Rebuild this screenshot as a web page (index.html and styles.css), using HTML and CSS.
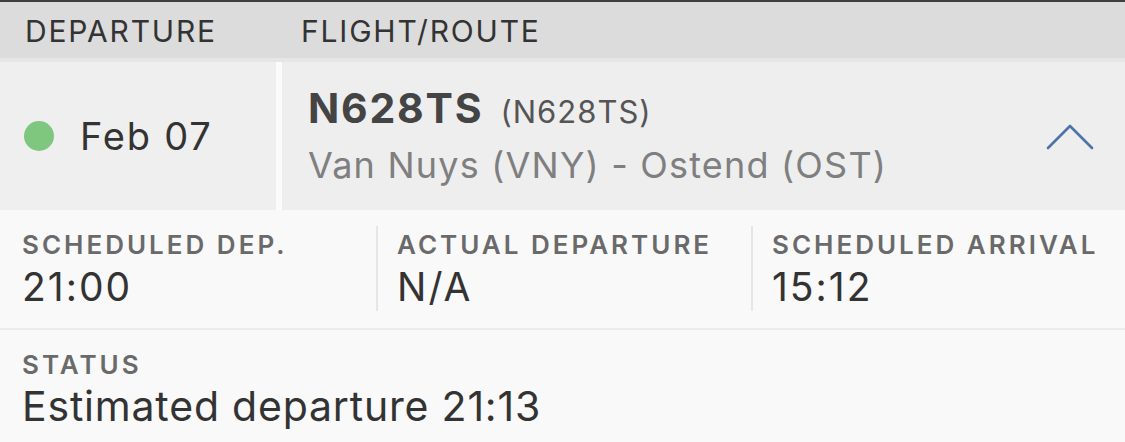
FILE: index.html
```html
<!DOCTYPE html>
<html>
<head>
<meta charset="utf-8">
<link rel="stylesheet" href="styles.css">
</head>
<body>
<div class="page">
  <div class="head">
    <div class="head-col head-dep">DEPARTURE</div>
    <div class="head-col head-route">FLIGHT/ROUTE</div>
  </div>
  <div class="flight">
    <div class="cell-date">
      <span class="dot"></span>
      <span class="date">Feb 07</span>
    </div>
    <div class="cell-route">
      <div class="route-text">
        <div class="title"><span class="reg">N628TS</span><span class="reg-sub">(N628TS)</span></div>
        <div class="route">Van Nuys (VNY) - Ostend (OST)</div>
      </div>
      <svg class="chev" width="48" height="26" viewBox="0 0 48 26">
        <polyline points="2,24 24,2 46,24" fill="none" stroke="#4e73a8" stroke-width="2.6" stroke-linecap="round" stroke-linejoin="round"/>
      </svg>
    </div>
  </div>
  <div class="times">
    <div class="tcol">
      <div class="label">SCHEDULED DEP.</div>
      <div class="value">21:00</div>
    </div>
    <div class="tcol div">
      <div class="label">ACTUAL DEPARTURE</div>
      <div class="value">N/A</div>
    </div>
    <div class="tcol div">
      <div class="label">SCHEDULED ARRIVAL</div>
      <div class="value">15:12</div>
    </div>
  </div>
  <div class="status">
    <div class="label">STATUS</div>
    <div class="svalue">Estimated departure 21:13</div>
  </div>
</div>
</body>
</html>
```

FILE: styles.css
```css
* { box-sizing: border-box; }
html, body { margin: 0; padding: 0; }
body {
  background: #f9f9f9;
  font-family: Inter, "Noto Sans", "Liberation Sans", sans-serif;
  width: 1125px;
  height: 442px;
  overflow: hidden;
}
.page { width: 1125px; }

.head {
  display: flex;
  height: 62px;
  background: #dcdcdc;
  border-top: 2px solid #3e3e3e;
  border-bottom: 4px solid #e6e6e6;
  color: #333;
  font-size: 30px;
  line-height: 36px;
  letter-spacing: 1.8px;
}
.head-col { padding-top: 11px; padding-left: 25px; }
.head-dep { width: 276px; }

.flight {
  display: flex;
  height: 148px;
  background: #fbfbfb;
  gap: 6px;
}
.cell-date {
  width: 276px;
  background: #efefef;
  display: flex;
  align-items: center;
  padding-left: 24px;
}
.dot {
  width: 30px;
  height: 30px;
  border-radius: 50%;
  background: #7fc77f;
  margin-right: 26px;
}
.date {
  font-size: 38px;
  color: #333;
  line-height: 48px;
  letter-spacing: 1.8px;
}
.cell-route {
  flex: 1;
  background: #eeeeee;
  display: flex;
  align-items: center;
  justify-content: space-between;
  padding-left: 26px;
  padding-right: 31px;
}
.title { line-height: 48px; color: #444; }
.reg { font-size: 41px; font-weight: 700; letter-spacing: 1.8px; }
.reg-sub { font-size: 31px; color: #555; margin-left: 17px; letter-spacing: 1px; }
.route { font-size: 36px; line-height: 48px; color: #7f7f7f; letter-spacing: 1.2px; }
.chev { margin-top: 2px; }

.times {
  display: grid;
  grid-template-columns: 376px 375px 1fr;
  border-bottom: 2px solid #ececec;
}
.tcol {
  margin: 16px 0 17px;
  padding: 5px 0 2px 22px;
}
.tcol.div {
  border-left: 2px solid #e6e6e6;
  padding-left: 19px;
}
.label {
  font-size: 26px;
  line-height: 28px;
  font-weight: 600;
  color: #6a6a6a;
  letter-spacing: 3px;
}
.value {
  margin-top: 6px;
  font-size: 39px;
  line-height: 44px;
  color: #333;
  letter-spacing: 2px;
}
.status { padding: 21px 0 0 22px; }
.svalue {
  margin-top: 3px;
  font-size: 41px;
  line-height: 48px;
  color: #333;
  letter-spacing: 0.8px;
}
```
